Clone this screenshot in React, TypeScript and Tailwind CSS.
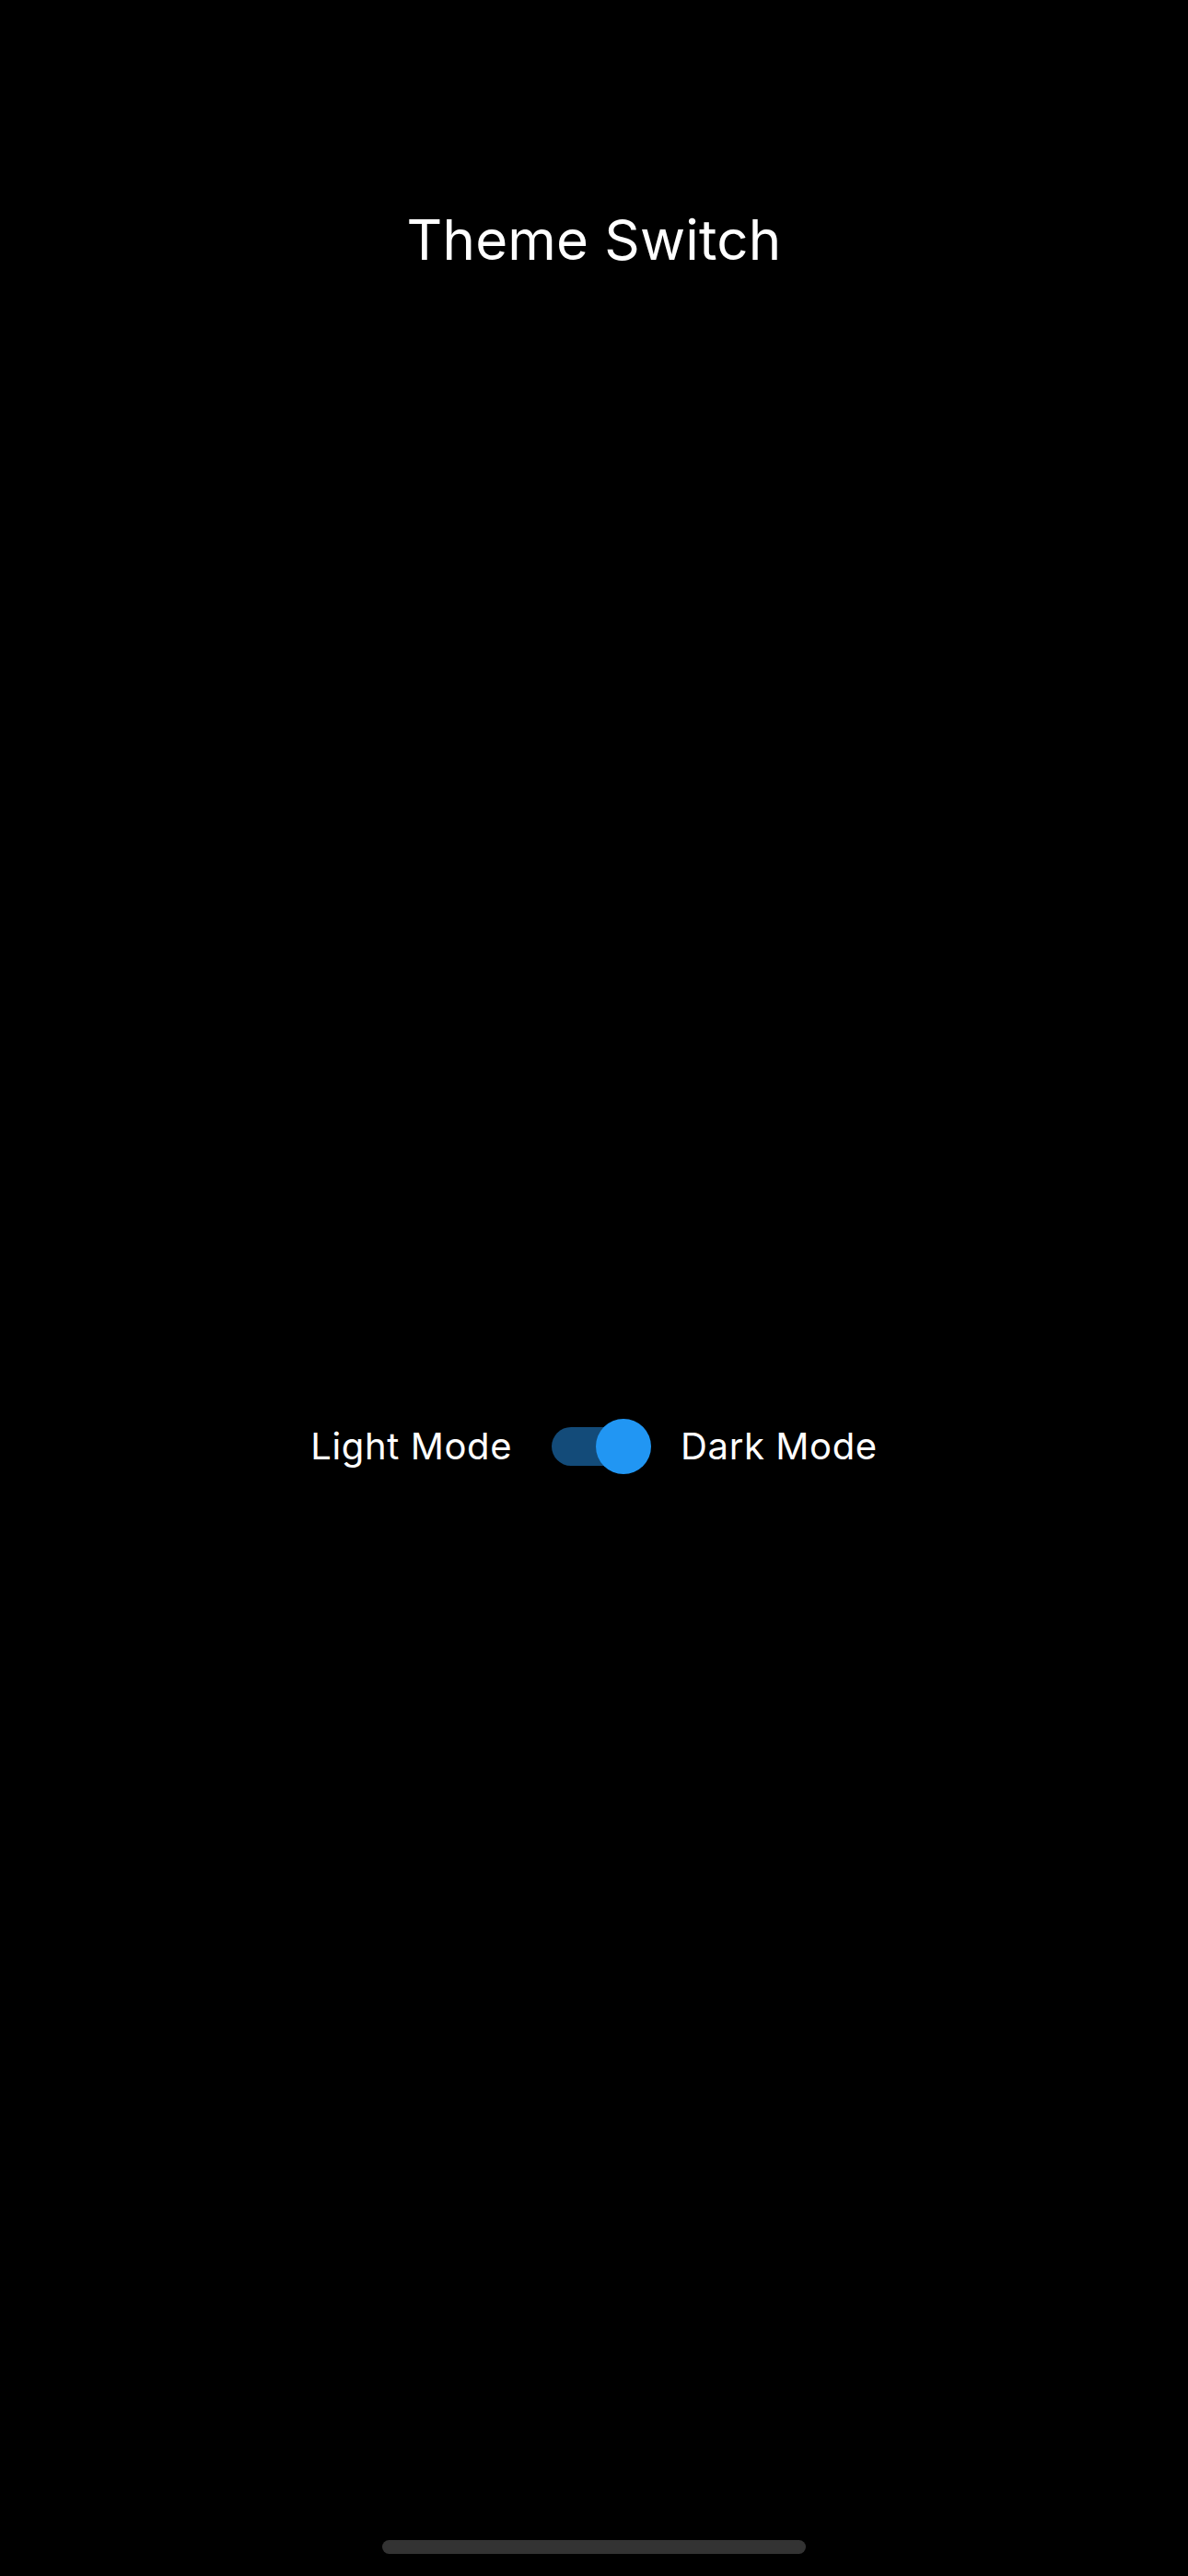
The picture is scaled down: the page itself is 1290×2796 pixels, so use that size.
import { useState } from "react";

export default function App() {
  const [dark, setDark] = useState(true);

  return (
    <div
      className="flex h-[2796px] w-[1290px] flex-col items-center bg-black text-white"
      style={{ fontFamily: "Inter, 'Noto Sans', sans-serif" }}
    >
      <h1 className="pt-[230px] text-[60px] leading-[60px] font-normal tracking-[0.2px]">Theme Switch</h1>

      <div className="mt-[1250px] flex h-[60px] items-center">
        <span className="text-[40px] leading-[60px] tracking-[0.6px]">Light Mode</span>
        <button
          onClick={() => setDark(!dark)}
          className="relative ml-[43px] mr-[32px] flex h-[60px] w-[108px] items-center"
        >
          <div className={"h-[42px] w-[102px] rounded-full " + (dark ? "bg-[#134b79]" : "bg-[#9e9e9e]")} />
          <div
            className={
              "absolute top-0 h-[60px] w-[60px] rounded-full " +
              (dark ? "right-0 bg-[#2196f3]" : "left-0 bg-[#fafafa]")
            }
          />
        </button>
        <span className="text-[40px] leading-[60px] tracking-[0.6px]">Dark Mode</span>
      </div>

      <div className="mt-auto mb-[24px] h-[15px] w-[460px] rounded-full bg-[#333333]" />
    </div>
  );
}
